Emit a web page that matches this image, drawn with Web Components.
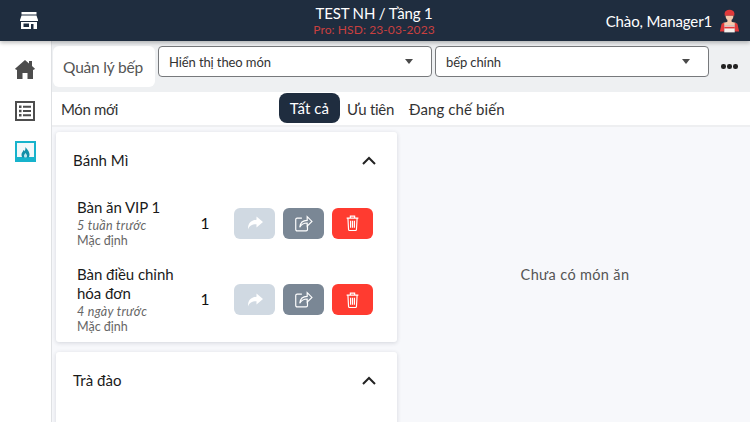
<!DOCTYPE html>
<html lang="vi">
<head>
<meta charset="utf-8">
<title>Quản lý bếp</title>
<style>
html, body { margin: 0; padding: 0; height: 100%; overflow: hidden; }
body { font-family: Lato, "Noto Sans", sans-serif; color: #1a1a1a; background: #fff; }
</style>
</head>
<body>
<kitchen-app></kitchen-app>
<script>
const BASE = `* { box-sizing: border-box; }`;

class AppHeader extends HTMLElement {
  connectedCallback() {
    this.attachShadow({ mode: "open" }).innerHTML = `
<style>
${BASE}
:host { display: block; position: relative; z-index: 2; flex: none; height: 41px; background: #1f2d3f; color: #fff; box-shadow: 0 2px 4px rgba(0,0,0,.25); }
.bar { height: 41px; display: grid; grid-template-columns: 1fr auto 1fr; align-items: center; padding: 0 10px; }
.logo { margin-left: 10px; }
.mid { padding: 0 2px 2px 0; }
.title { text-align: center; font-size: 15px; line-height: 18px; letter-spacing: -.15px; padding-top: 1px; }
.pro { text-align: center; font-size: 12px; line-height: 15px; color: #c9403f; letter-spacing: .1px; }
.user { justify-self: end; display: flex; align-items: center; gap: 7px; font-size: 15px; letter-spacing: -.15px; }
svg { display: block; }
</style>
<div class="bar">
  <svg class="logo" width="18" height="17" viewBox="0 0 18 17"><path fill="#fff" d="M1.500 0h15v2.500h-15zM1.500 3.500h15L18 8v1H0V8zM1 10h16v7h-3.500v-5H11v5H1zM3.500 11.500V15H9v-3.500z" fill-rule="evenodd"/></svg>
  <div class="mid"><div class="title">TEST NH / Tầng 1</div><div class="pro">Pro: HSD: 23-03-2023</div></div>
  <div class="user"><span>Chào, Manager1</span>
    <svg width="21" height="24" viewBox="0 0 24 26">
      <path fill="#e0393a" d="M6.500 4c0-2.500 2.500-4 5.500-4s5.500 1.500 5.500 4v3h-11z"/>
      <path fill="#f6c9ad" d="M7.500 7h9c0 3.500-1.800 5.500-4.500 5.500S7.500 10.500 7.500 7zM9.500 12h5v3h-5z"/>
      <path fill="#f6c9ad" d="M5 15l4-1h6l4 1 2 3H3z"/>
      <path fill="#e0393a" d="M1 25l2-9 3-1v10zM23 25l-2-9-3-1v10z"/>
      <path fill="#f7f0ec" d="M6 18h12v8H6z"/>
      <path fill="#e0393a" d="M6 19.500h12v2H6z"/>
    </svg>
  </div>
</div>`;
  }
}

class SideNav extends HTMLElement {
  connectedCallback() {
    this.attachShadow({ mode: "open" }).innerHTML = `
<style>
${BASE}
:host { display: flex; flex-direction: column; align-items: center; flex: none; width: 52px; background: #fff; border-right: 1px solid #dfe1e4; padding: 19px 1px 0 0; gap: 20.500px; }
svg { display: block; }
</style>
<svg width="20" height="20" viewBox="0 0 20 20"><path fill="#4d4d4d" d="M10 0l4 3.400V1h3v5l3 2.700-1.300 1.400L18 9.600V19h-5.500v-6h-5v6H2V9.600l-.7.500L0 8.700z"/></svg>
<svg width="20" height="20" viewBox="0 0 20 20"><path fill="none" stroke="#4d4d4d" stroke-width="2" d="M1 1h18v18H1z"/><path fill="#4d4d4d" d="M4 4.500h2.500V7H4zM8 4.800h8v2H8zM4 8.800h2.500v2.500H4zM8 9h8v2H8zM4 13h2.500v2.500H4zM8 13.300h8v2H8z"/></svg>
<svg width="21" height="21" viewBox="0 0 21 21"><path fill="#f2f8fa" d="M1 1h19v19H1z"/><path fill="none" stroke="#17b3cc" stroke-width="2" d="M1 1h19v19H1z"/><path fill="#17b3cc" d="M2 16h17v3H2z"/><path fill="#138fa8" d="M10.500 6c1 2 4 4 4 7.500 0 1.500-.5 2.500-1 3h-6c-.6-.6-1-1.600-1-3 0-2 1.500-2.800 2-4.500.6.300 1 .8 1.200 1.300.6-1.200.9-2.600.8-4.300z"/><path fill="#bfe6ee" d="M10.500 12c.8 1 1.600 2 1.600 3l-.6 1.500h-2l-.6-1.500c0-1 .8-2 1.600-3z"/></svg>`;
  }
}

class SelectBox extends HTMLElement {
  connectedCallback() {
    this.attachShadow({ mode: "open" }).innerHTML = `
<style>
${BASE}
:host { display: flex; align-items: center; justify-content: space-between; flex: none; width: 274px; height: 31px; background: #fff; border: 1px solid #77797c; border-radius: 4px; padding: 0 18px 0 10px; font-size: 13px; letter-spacing: -.1px; color: #333; }
i { width: 0; height: 0; border: 4.500px solid transparent; border-top: 5px solid #4a4a4a; border-bottom: 0; }
</style>
<slot></slot><i></i>`;
  }
}

class KitchenToolbar extends HTMLElement {
  connectedCallback() {
    this.attachShadow({ mode: "open" }).innerHTML = `
<style>
${BASE}
:host { display: flex; flex: none; height: 51px; background: #eef0f2; padding: 5px 0 0 1px; }
.tab { width: 102px; height: 41px; background: #fff; border-radius: 6px; display: flex; align-items: center; justify-content: center; font-size: 15.5px; letter-spacing: -.2px; color: #555; padding: 1px 2px 0 0; }
.selects { display: flex; gap: 3px; margin-left: 3px; }
.more { display: flex; gap: 1.500px; margin: 18px 0 0 12px; }
.more b { width: 4.500px; height: 4.500px; border-radius: 50%; background: #222; }
</style>
<div class="tab">Quản lý bếp</div>
<div class="selects">
  <select-box>Hiển thị theo món</select-box>
  <select-box>bếp chính</select-box>
</div>
<div class="more"><b></b><b></b><b></b></div>`;
  }
}

class StatusTabs extends HTMLElement {
  connectedCallback() {
    this.attachShadow({ mode: "open" }).innerHTML = `
<style>
${BASE}
:host { display: flex; align-items: center; flex: none; height: 35px; background: #fff; border-bottom: 2px solid #eeeff1; font-size: 15px; letter-spacing: .1px; color: #333; padding-left: 9px; }
.new { width: 218px; letter-spacing: -.35px; }
.on { background: #1f2d3f; color: #fff; border-radius: 8px; height: 30px; width: 61px; display: flex; align-items: center; justify-content: center; margin-top: -1px; }
.t { margin-left: 7px; margin-right: 8px; }
.pri { letter-spacing: -.3px; }
</style>
<span class="new">Món mới</span><span class="on">Tất cả</span><span class="t pri">Ưu tiên</span><span class="t">Đang chế biến</span>`;
  }
}

class ActionBtn extends HTMLElement {
  connectedCallback() {
    const icons = {
      forward: `<svg width="16" height="14" viewBox="0 0 16 13"><path fill="#fff" d="M9.500 0L16 5.500 9.500 11V7.800C5 7.800 2.500 9 1 13 .7 7.500 3.500 3.500 9.500 3.200z"/></svg>`,
      share: `<svg width="18" height="17" viewBox="0 0 17 16"><path fill="none" stroke="#fff" stroke-width="1.100" d="M6.500 3H2a1.300 1.300 0 0 0-1.300 1.300v9.400A1.300 1.300 0 0 0 2 15h8.500a1.300 1.300 0 0 0 1.300-1.300V10.500M4.500 11.500C5 7 8 5 11.500 5V1.500L16 6l-4.500 4.500V7.500c-3 0-5.500 1-7 4z"/></svg>`,
      trash: `<svg width="13" height="16" viewBox="0 0 12 15"><path fill="none" stroke="#fff" stroke-width="1.100" d="M.5 3h11M4 3V1h4v2M1.700 3l.6 10.500a1 1 0 0 0 1 1h5.400a1 1 0 0 0 1-1L10.300 3M4.200 5.500v6.500M6 5.500v6.500M7.800 5.500v6.500"/></svg>`
    };
    const colors = { forward: "#d0d9e2", share: "#7a8795", trash: "#ff3b30" };
    const kind = this.getAttribute("kind");
    this.attachShadow({ mode: "open" }).innerHTML = `
<style>
:host { display: flex; align-items: center; justify-content: center; width: 41px; height: 31px; border-radius: 6px; background: ${colors[kind]}; }
svg { display: block; }
</style>${icons[kind]}`;
  }
}

class OrderRow extends HTMLElement {
  connectedCallback() {
    this.attachShadow({ mode: "open" }).innerHTML = `
<style>
${BASE}
:host { display: flex; align-items: center; padding-left: 21px; }
.info { width: 118px; }
.name { font-size: 15px; line-height: 19px; letter-spacing: -.05px; color: #1a1a1a; }
.time { font-size: 12.5px; line-height: 15px; padding-top: 1px; font-style: italic; color: #666; letter-spacing: .3px; }
.note { font-size: 12.5px; line-height: 15px; color: #666; }
.qty { width: 20px; text-align: center; font-size: 15.5px; color: #111; margin: 0 19px 1px 0; }
.acts { display: flex; gap: 8px; }
</style>
<div class="info">
  <div class="name">${this.getAttribute("name")}</div>
  <div class="time">${this.getAttribute("time")}</div>
  <div class="note">Mặc định</div>
</div>
<div class="qty">1</div>
<div class="acts">
  <action-btn kind="forward"></action-btn>
  <action-btn kind="share"></action-btn>
  <action-btn kind="trash"></action-btn>
</div>`;
  }
}

class OrderCard extends HTMLElement {
  connectedCallback() {
    this.attachShadow({ mode: "open" }).innerHTML = `
<style>
${BASE}
:host { display: block; flex: none; background: #fff; border-radius: 3px; box-shadow: 0 1px 4px rgba(30,40,60,.16); padding-bottom: 8px; }
.head { display: flex; align-items: center; justify-content: space-between; height: 57px; padding: 0 21px 0 17px; font-size: 15px; letter-spacing: .05px; color: #1a1a1a; }
.head span { padding-bottom: 2px; }
.rows { display: flex; flex-direction: column; gap: 17px; padding-top: 9px; }
svg { display: block; }
</style>
<div class="head"><span>${this.getAttribute("title")}</span>
<svg width="14" height="9" viewBox="0 0 14 9"><path fill="none" stroke="#222" stroke-width="2" d="M1 8l6-6 6 6"/></svg></div>
<div class="rows"><slot></slot></div>`;
  }
}

class KitchenApp extends HTMLElement {
  connectedCallback() {
    this.attachShadow({ mode: "open" }).innerHTML = `
<style>
${BASE}
:host { display: flex; flex-direction: column; width: 750px; height: 422px; overflow: hidden; }
.body { flex: 1; display: flex; min-height: 0; }
.main { flex: 1; display: flex; flex-direction: column; min-width: 0; }
.board { flex: 1; display: flex; min-height: 0; background: #f7f8fb; overflow: hidden; }
.list { flex: none; width: 341px; margin: 5px 0 0 4px; display: flex; flex-direction: column; gap: 10px; }
.empty { flex: 1; display: flex; align-items: center; justify-content: center; font-size: 14.5px; letter-spacing: .35px; color: #555; padding-left: 3px; }
</style>
<app-header></app-header>
<div class="body">
  <side-nav></side-nav>
  <div class="main">
    <kitchen-toolbar></kitchen-toolbar>
    <status-tabs></status-tabs>
    <div class="board">
      <div class="list">
        <order-card title="Bánh Mì">
          <order-row name="Bàn ăn VIP 1" time="5 tuần trước"></order-row>
          <order-row name="Bàn điều chỉnh hóa đơn" time="4 ngày trước"></order-row>
        </order-card>
        <order-card title="Trà đào" style="height:120px"></order-card>
      </div>
      <div class="empty">Chưa có món ăn</div>
    </div>
  </div>
</div>`;
  }
}

customElements.define("app-header", AppHeader);
customElements.define("side-nav", SideNav);
customElements.define("select-box", SelectBox);
customElements.define("kitchen-toolbar", KitchenToolbar);
customElements.define("status-tabs", StatusTabs);
customElements.define("action-btn", ActionBtn);
customElements.define("order-row", OrderRow);
customElements.define("order-card", OrderCard);
customElements.define("kitchen-app", KitchenApp);
</script>
</body>
</html>
